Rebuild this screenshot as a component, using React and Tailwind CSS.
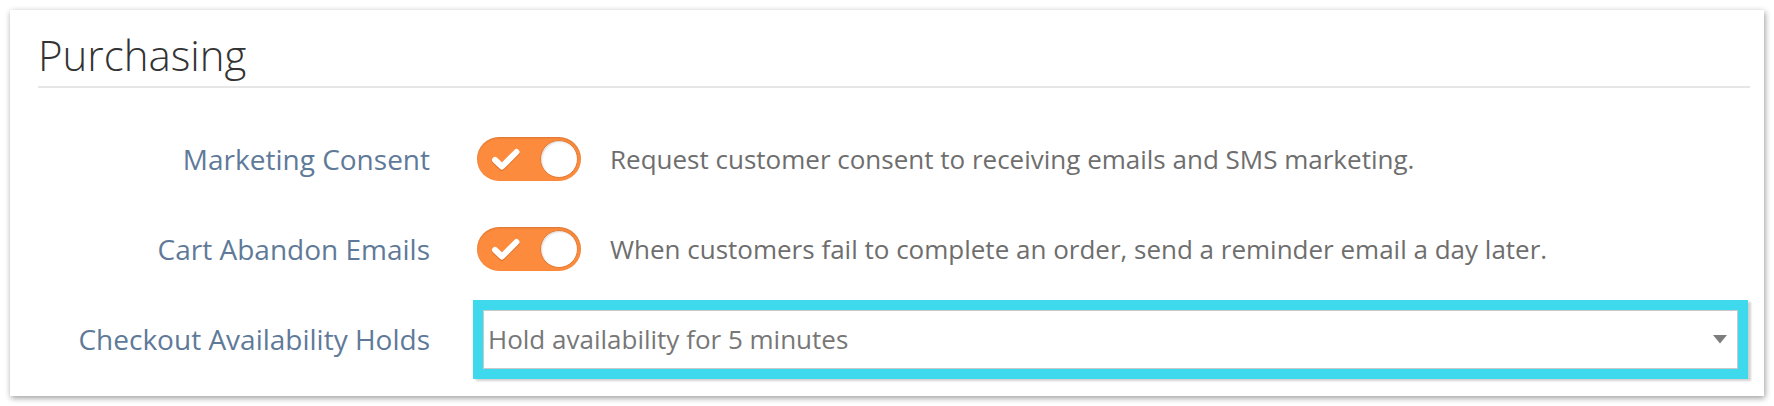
import React from "react";

function Toggle() {
  return (
    <div className="relative w-[104px] h-[44px] rounded-full bg-[#fd8b3d] shrink-0 shadow-[inset_0_1px_2px_rgba(0,0,0,0.15)]">
      <svg
        className="absolute left-[14px] top-[10px]"
        width="30"
        height="24"
        viewBox="0 0 30 24"
      >
        <path
          d="M4 13 L11 19.5 L25.5 5"
          fill="none"
          stroke="rgba(170,70,10,0.35)"
          strokeWidth="6.5"
          strokeLinecap="round"
          strokeLinejoin="round"
          transform="translate(0,1)"
        />
        <path
          d="M4 13 L11 19.5 L25.5 5"
          fill="none"
          stroke="#ffffff"
          strokeWidth="6"
          strokeLinecap="round"
          strokeLinejoin="round"
        />
      </svg>
      <div className="absolute right-[3px] top-[3px] w-[38px] h-[38px] rounded-full bg-white border border-[#e27a33] shadow-[inset_1px_1px_2px_rgba(0,0,0,0.15)]" />
    </div>
  );
}

function ToggleRow({ label, desc }) {
  return (
    <div className="h-[90px] flex items-center">
      <div className="w-[392px] text-right text-[28px] text-[#5f7a99] leading-[38px]">
        {label}
      </div>
      <div className="ml-[47px]">
        <Toggle />
      </div>
      <div className="ml-[29px] text-[26px] text-[#6e6e6e] leading-[36px] whitespace-nowrap">
        {desc}
      </div>
    </div>
  );
}

export default function App() {
  return (
    <div
      className="w-[1774px] h-[406px] bg-white pt-[10px] pl-[10px] overflow-hidden"
      style={{ fontFamily: '"Open Sans", "Noto Sans", sans-serif' }}
    >
      <div className="w-[1754px] h-[386px] bg-white shadow-[1px_2px_6px_rgba(0,0,0,0.4)] pl-[28px] pr-[14px] pt-[23px]">
        <h2 className="text-[42px] leading-[44px] font-light text-[#333333] pb-[9px] border-b-2 border-[#e6e6e6]">
          Purchasing
        </h2>
        <div className="mt-[26px]">
          <ToggleRow
            label="Marketing Consent"
            desc="Request customer consent to receiving emails and SMS marketing."
          />
          <ToggleRow
            label="Cart Abandon Emails"
            desc="When customers fail to complete an order, send a reminder email a day later."
          />
          <div className="h-[90px] flex items-center">
            <div className="w-[392px] text-right text-[28px] text-[#5f7a99] leading-[38px]">
              Checkout Availability Holds
            </div>
            <div className="ml-[53px] w-[1255px] h-[59px] bg-white border border-[#c9c9c9] flex items-center justify-between pl-[4px] pr-[10px] shadow-[0_0_0_10px_#3fd9ee,3px_2px_2px_10px_rgba(0,0,0,0.18)]">
              <span className="text-[26px] text-[#777777] leading-[36px]">
                Hold availability for 5 minutes
              </span>
              <svg width="14" height="9" viewBox="0 0 14 9">
                <path d="M0 0 H14 L7 8.5 Z" fill="#7d7d7d" />
              </svg>
            </div>
          </div>
        </div>
      </div>
    </div>
  );
}
